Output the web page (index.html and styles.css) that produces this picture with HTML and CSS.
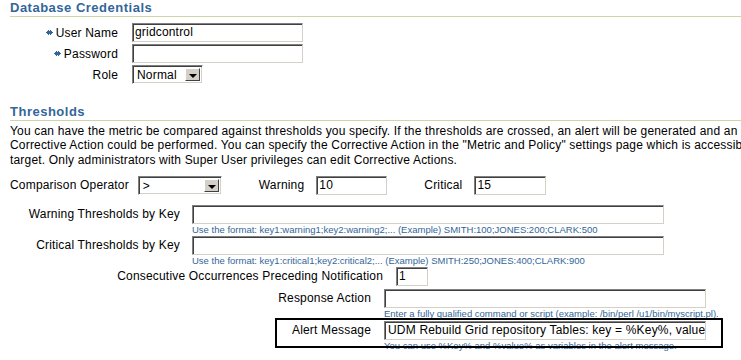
FILE: index.html
```html
<!DOCTYPE html>
<html lang="en">
<head>
  <meta charset="UTF-8">
  <title>Metric Thresholds</title>
  <link rel="stylesheet" href="styles.css">
</head>
<body>
  <!-- Database credentials -->
  <h2 class="section-title">Database Credentials</h2>
  <div class="cred-grid">
    <label class="cred-label">
      <svg class="req" width="7" height="5" viewBox="0 0 7 5"><rect x="0" y="2" width="7" height="1" fill="#336699"/><rect x="1" y="1" width="5" height="3" fill="#336699"/><rect x="2" y="0" width="1" height="5" fill="#336699"/><rect x="4" y="0" width="1" height="5" fill="#336699"/></svg>
      User Name</label>
    <div class="field w171">gridcontrol</div>

    <label class="cred-label">
      <svg class="req" width="7" height="5" viewBox="0 0 7 5"><rect x="0" y="2" width="7" height="1" fill="#336699"/><rect x="1" y="1" width="5" height="3" fill="#336699"/><rect x="2" y="0" width="1" height="5" fill="#336699"/><rect x="4" y="0" width="1" height="5" fill="#336699"/></svg>
      Password</label>
    <div class="field w171"></div>

    <label class="cred-label">Role</label>
    <div class="select w71"><span class="select-value">Normal</span><span class="select-btn"></span></div>
  </div>

  <!-- Thresholds -->
  <h2 class="section-title thresholds-title">Thresholds</h2>
  <p class="intro">
    <span>You can have the metric be compared against thresholds you specify. If the thresholds are crossed, an alert will be generated and an</span><br>
    <span>Corrective Action could be performed. You can specify the Corrective Action in the "Metric and Policy" settings page which is accessible from the home page of the</span><br>
    <span>target. Only administrators with Super User privileges can edit Corrective Actions.</span>
  </p>

  <div class="op-row">
    <span class="op-label">Comparison Operator</span>
    <div class="select w84"><span class="select-value">&gt;</span><span class="select-btn"></span></div>
    <span class="op-label gap-left">Warning</span>
    <div class="field w71">10</div>
    <span class="op-label gap-left">Critical</span>
    <div class="field w72">15</div>
  </div>

  <div class="kv-row key-row">
    <span class="kv-label">Warning Thresholds by Key</span>
    <div class="kv-value">
      <div class="field w472"></div>
      <div class="hint">Use the format: key1:warning1;key2:warning2;... (Example) SMITH:100;JONES:200;CLARK:500</div>
    </div>
  </div>

  <div class="kv-row key-row">
    <span class="kv-label">Critical Thresholds by Key</span>
    <div class="kv-value">
      <div class="field w472"></div>
      <div class="hint">Use the format: key1:critical1;key2:critical2;... (Example) SMITH:250;JONES:400;CLARK:900</div>
    </div>
  </div>

  <div class="kv-row occ-row">
    <span class="kv-label">Consecutive Occurrences Preceding Notification</span>
    <div class="kv-value">
      <div class="field w32">1</div>
    </div>
  </div>

  <div class="kv-row action-row">
    <span class="kv-label">Response Action</span>
    <div class="kv-value">
      <div class="field w321"></div>
      <div class="hint">Enter a fully qualified command or script (example: /bin/perl /u1/bin/myscript.pl).</div>
    </div>
  </div>

  <div class="kv-row action-row alert-row">
    <span class="kv-label">Alert Message</span>
    <div class="kv-value">
      <div class="field w321 clip">UDM Rebuild Grid repository Tables: key = %Key%, value = %value%</div>
      <div class="hint">You can use %Key% and %value% as variables in the alert message.</div>
    </div>
    <div class="highlight-box"></div>
  </div>
</body>
</html>
```

FILE: styles.css
```css
html {
  overflow: hidden;
}

body {
  margin: 0;
  padding: 0 0 0 10px;
  font-family: "Liberation Sans", Arial, sans-serif;
  font-size: 12px;
  letter-spacing: 0.18px;
  color: #000;
  background: #fff;
  width: 900px;
}

.section-title {
  margin: 0;
  padding-top: 1px;
  font-size: 13px;
  font-weight: bold;
  letter-spacing: 0.5px;
  color: #336699;
  line-height: 14px;
  border-bottom: 1px solid #ccd6a6;
  padding-bottom: 1px;
  width: 731px;
}

.thresholds-title {
  margin-top: 20px;
}

/* credentials */
.cred-grid {
  display: grid;
  grid-template-columns: 108px auto;
  column-gap: 14px;
  row-gap: 2px;
  margin-top: 6px;
  align-items: center;
  justify-items: start;
}

.cred-label {
  justify-self: end;
  display: flex;
  align-items: center;
  gap: 3px;
}

.req {
  display: block;
}

/* fake form controls */
.field {
  box-sizing: border-box;
  height: 19px;
  padding: 1px 3px 0 2px;
  line-height: 15px;
  background: #fff;
  border-top: 1px solid #808080;
  border-left: 1px solid #808080;
  border-right: 1px solid #d4d0c8;
  border-bottom: 1px solid #d4d0c8;
  box-shadow: inset 1px 1px 0 #404040;
  white-space: nowrap;
  overflow: hidden;
}

.select {
  box-sizing: border-box;
  height: 19px;
  display: flex;
  align-items: stretch;
  background: #fff;
  border-top: 1px solid #808080;
  border-left: 1px solid #808080;
  border-right: 1px solid #fff;
  border-bottom: 1px solid #fff;
  box-shadow: inset 1px 1px 0 #404040, inset -1px -1px 0 #d4d0c8;
  padding: 2px;
}

.select-value {
  flex: 1;
  line-height: 14px;
  padding-left: 2px;
}

.select-btn {
  width: 15px;
  box-sizing: border-box;
  background: #d4d0c8;
  border-top: 1px solid #fff;
  border-left: 1px solid #fff;
  border-right: 1px solid #404040;
  border-bottom: 1px solid #404040;
  position: relative;
}

.select-btn::after {
  content: "";
  position: absolute;
  left: 3px;
  top: 5px;
  border-left: 4px solid transparent;
  border-right: 4px solid transparent;
  border-top: 4px solid #000;
}

.w171 { width: 171px; }
.w71 { width: 71px; }
.w72 { width: 72px; }
.w84 { width: 84px; }
.w32 { width: 32px; }
.w321 { width: 322px; }
.w472 { width: 472px; }

.clip {
  padding-left: 3px;
}

/* thresholds */
.intro {
  margin: 3px 0 0 0;
  line-height: 14.3px;
  white-space: nowrap;
}

.op-row {
  display: flex;
  align-items: center;
  margin-top: 9px;
}

.op-row .op-label {
  margin-right: 9px;
}

.op-row .gap-left {
  margin-left: 37px;
  margin-right: 12px;
}

.kv-row {
  display: flex;
  align-items: flex-start;
}

.kv-label {
  text-align: right;
  line-height: 19px;
  white-space: nowrap;
}

.hint {
  font-size: 9.5px;
  letter-spacing: 0;
  color: #336699;
  line-height: 12px;
  white-space: nowrap;
}

.key-row {
  margin-top: 10px;
}

.key-row + .key-row {
  margin-top: 0;
}

.key-row .kv-label {
  width: 170px;
  margin-right: 12px;
}

.occ-row {
  margin-top: 0;
}

.occ-row .kv-label {
  width: 373px;
  margin-right: 13px;
}

.action-row {
  margin-top: 3px;
}

.action-row .kv-label {
  width: 361px;
  margin-right: 13px;
}

.alert-row {
  margin-top: 1px;
  position: relative;
}

/* highlight frame drawn over the alert message row */
.highlight-box {
  position: absolute;
  left: 265px;
  top: -3px;
  width: 448px;
  height: 30px;
  border: 2px solid #000;
  box-sizing: border-box;
  pointer-events: none;
}
```
